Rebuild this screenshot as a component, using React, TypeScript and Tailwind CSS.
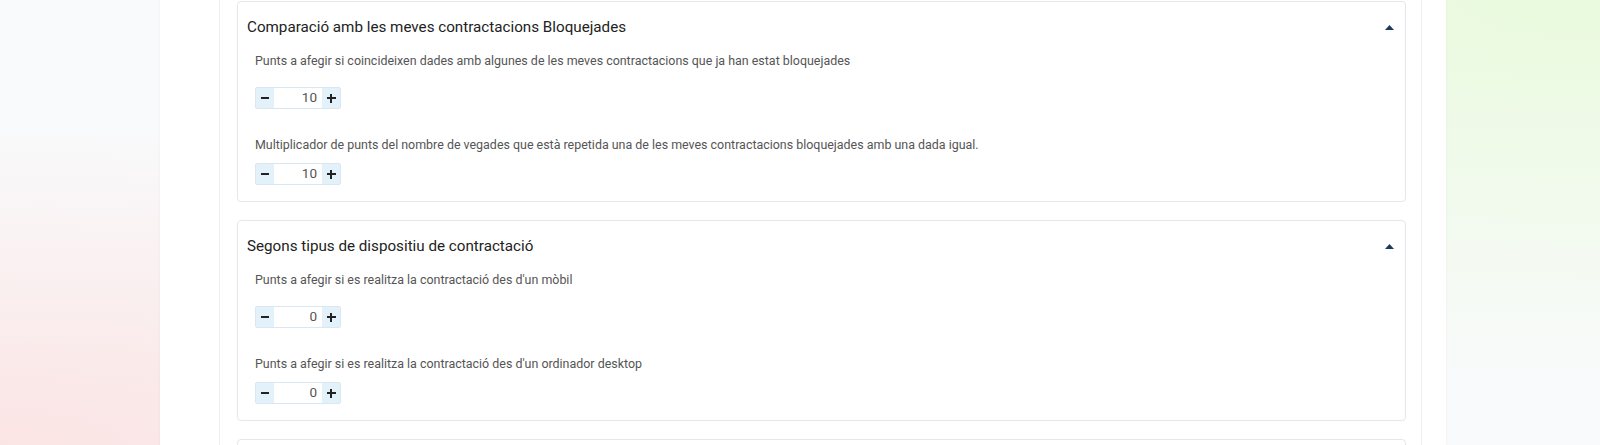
import React from "react";

function Stepper({ value }: { value: number }) {
  return (
    <div className="flex h-[22px] w-[86px] items-stretch rounded-[2px] border border-[#dbe7f0] bg-white">
      <button className="flex w-[18px] items-center justify-center bg-[#e3f1fb]">
        <span className="block h-[2px] w-[8px] bg-[#222]" />
      </button>
      <div className="flex flex-1 items-center justify-end pr-[5px] text-[13.5px] leading-none text-[#555]">
        {value}
      </div>
      <button className="relative flex w-[18px] items-center justify-center bg-[#e3f1fb]">
        <span className="absolute h-[2px] w-[9px] bg-[#222]" />
        <span className="absolute h-[9px] w-[2px] bg-[#222]" />
      </button>
    </div>
  );
}

function Caret() {
  return (
    <svg width="9" height="5" viewBox="0 0 9 5" className="block">
      <path d="M0 5 L4.5 0 L9 5 Z" fill="#1b3a5c" />
    </svg>
  );
}

function Card({
  title,
  fields,
}: {
  title: string;
  fields: { label: string; value: number }[];
}) {
  return (
    <div className="mb-[18px] h-[201px] rounded-[4px] border border-[#e4e7eb] bg-white pl-[9px] pr-[11px] pt-[13px]">
      <div className="flex h-[24px] items-center justify-between">
        <div className="text-[15.2px] leading-[24px] text-[#222]">{title}</div>
        <Caret />
      </div>
      <div className="pl-[8px]">
        <div className="mt-[12px] text-[12.45px] leading-[20px] text-[#555]">{fields[0].label}</div>
        <div className="mt-[16px]">
          <Stepper value={fields[0].value} />
        </div>
        <div className="mt-[26px] text-[12.45px] leading-[20px] text-[#555]">{fields[1].label}</div>
        <div className="mt-[8px]">
          <Stepper value={fields[1].value} />
        </div>
      </div>
    </div>
  );
}

export default function App() {
  return (
    <div
      className="relative h-[445px] w-full overflow-hidden bg-[#f9fafb] bg-[radial-gradient(ellipse_at_0%_100%,#fbe4e4_0%,rgba(251,228,228,0)_50%),radial-gradient(ellipse_at_100%_0%,#e9fadd_0%,rgba(236,251,226,0)_60%)]"
      style={{ fontFamily: "Roboto, 'Liberation Sans', sans-serif" }}
    >
      <div className="ml-[160px] h-full w-[1286px] bg-white shadow-[0_0_3px_rgba(0,0,0,0.05)]">
        <div className="ml-[59px] h-full w-[1203px] border-x border-[#eceef1] pl-[17px] pr-[15px] pt-[1px]">
          <Card
            title="Comparació amb les meves contractacions Bloquejades"
            fields={[
              {
                label:
                  "Punts a afegir si coincideixen dades amb algunes de les meves contractacions que ja han estat bloquejades",
                value: 10,
              },
              {
                label:
                  "Multiplicador de punts del nombre de vegades que està repetida una de les meves contractacions bloquejades amb una dada igual.",
                value: 10,
              },
            ]}
          />
          <Card
            title="Segons tipus de dispositiu de contractació"
            fields={[
              {
                label: "Punts a afegir si es realitza la contractació des d'un mòbil",
                value: 0,
              },
              {
                label:
                  "Punts a afegir si es realitza la contractació des d'un ordinador desktop",
                value: 0,
              },
            ]}
          />
          <div className="h-[202px] rounded-[4px] border border-[#e4e7eb] bg-white" />
        </div>
      </div>
    </div>
  );
}
